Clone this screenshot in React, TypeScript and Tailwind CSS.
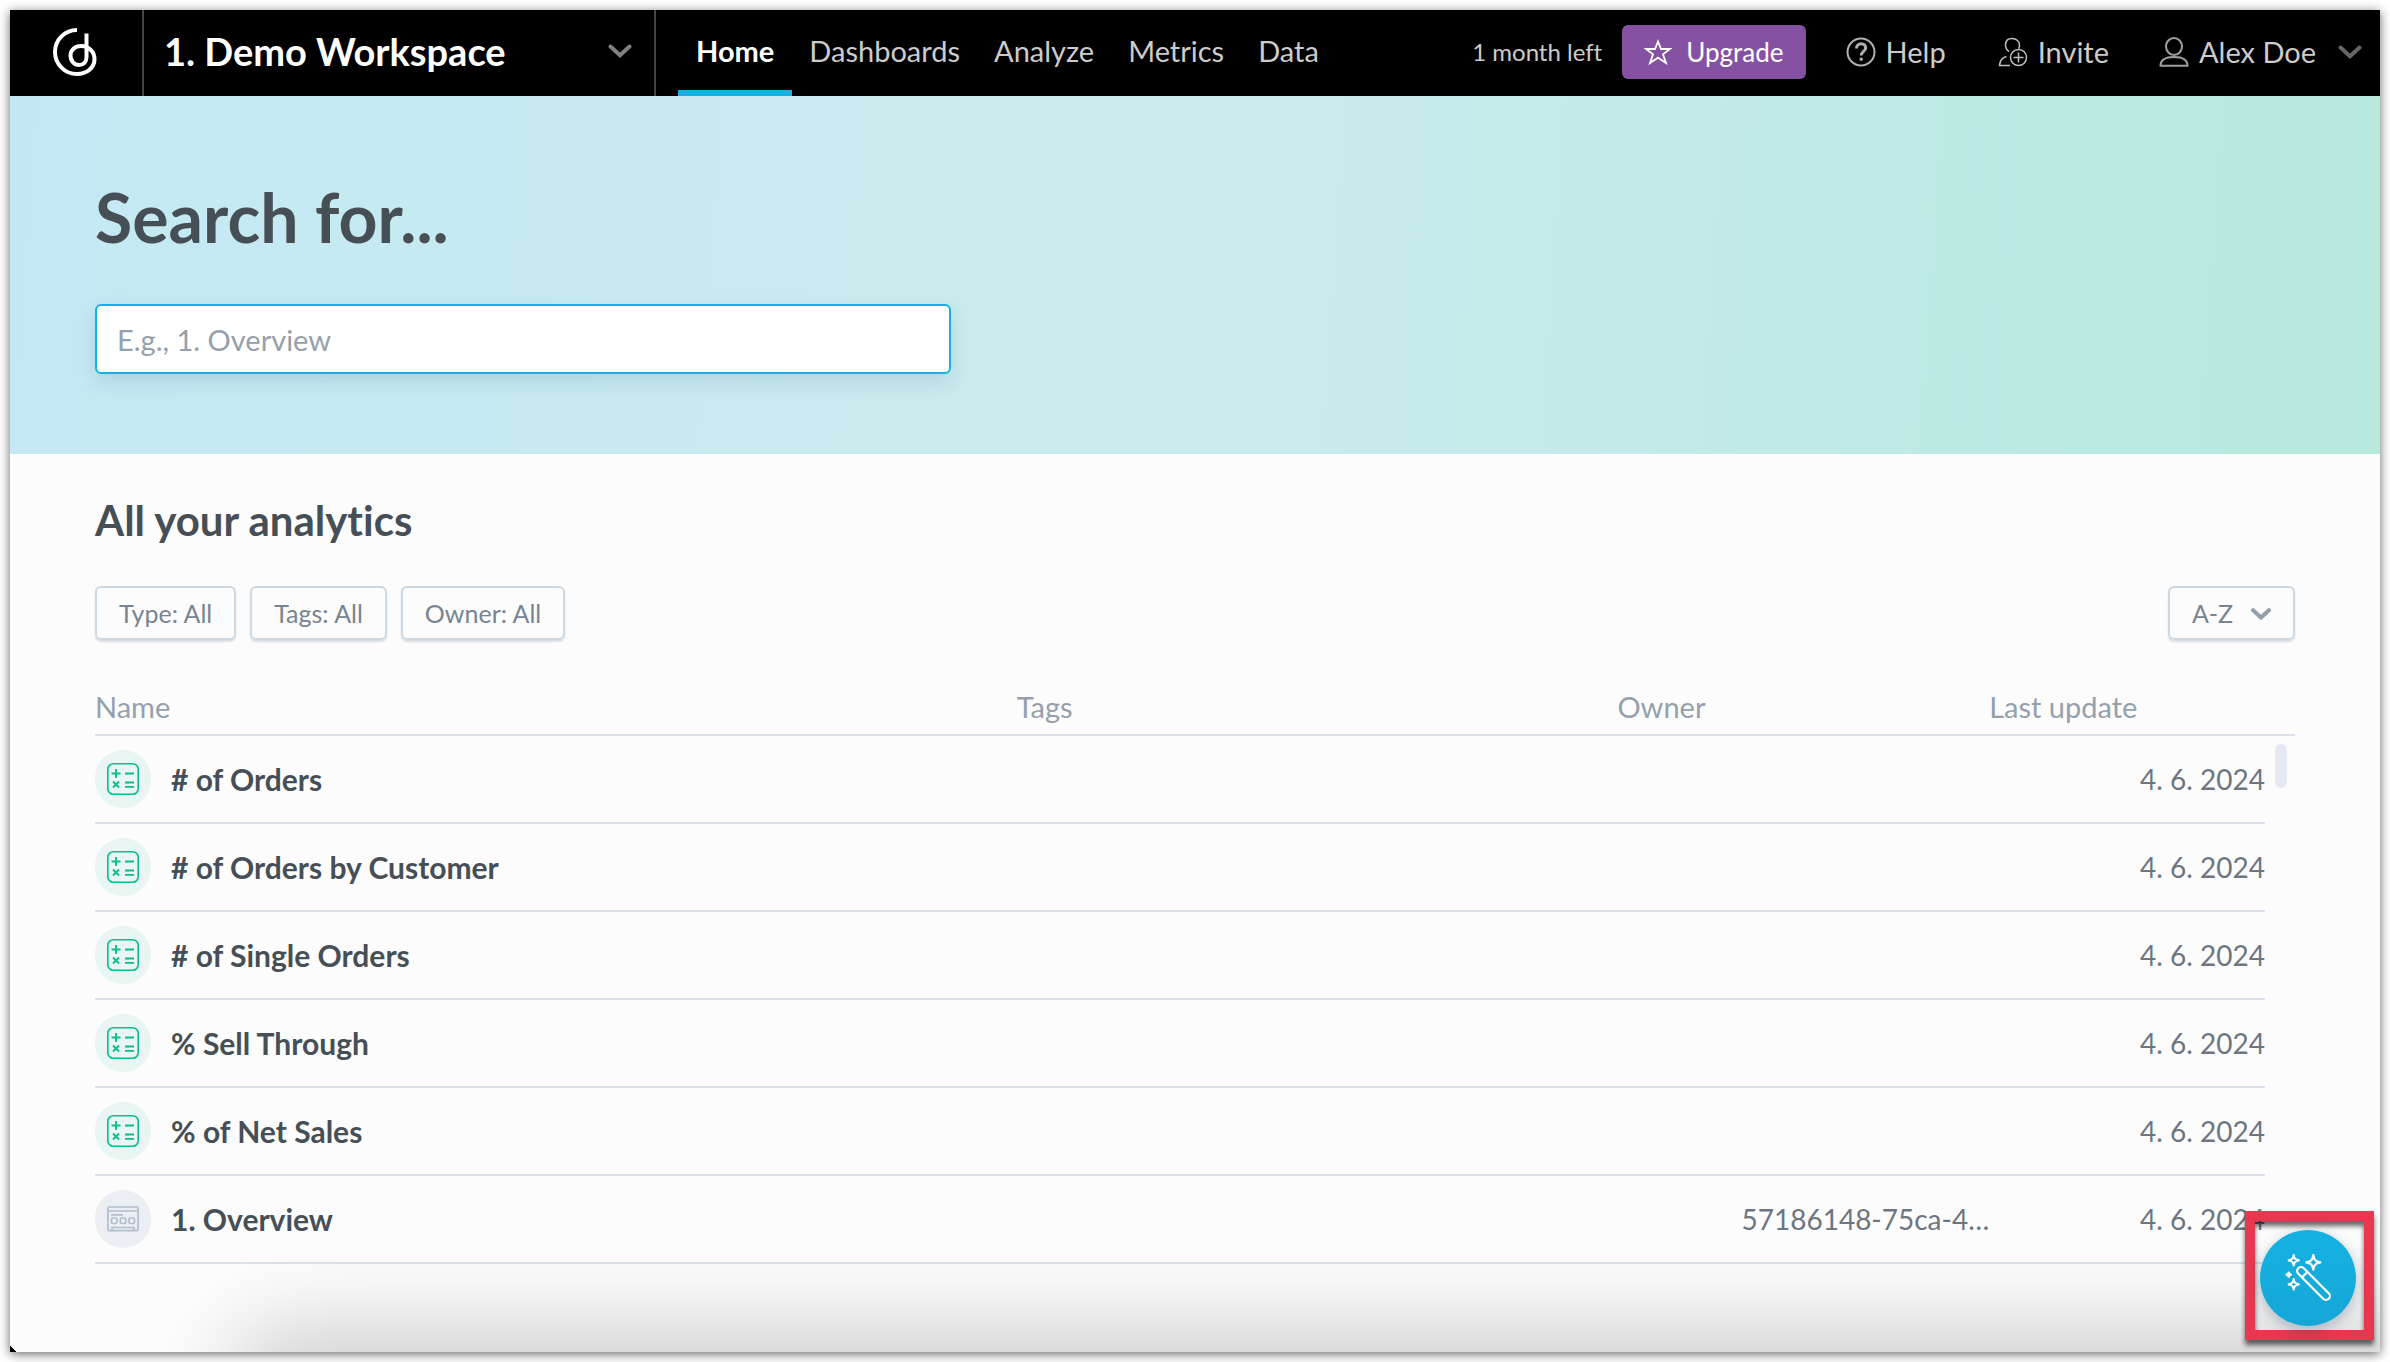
import { ReactNode } from "react";

function Chevron({ className, stroke = 4 }: { className: string; stroke?: number }) {
  return (
    <svg viewBox="0 0 24 14" className={className} fill="none" stroke="currentColor" strokeWidth={stroke} strokeLinecap="round" strokeLinejoin="miter" aria-hidden="true">
      <path d="M2.5 2.5 12 11.2 21.5 2.5" />
    </svg>
  );
}

function Logo() {
  return (
    <svg viewBox="0 0 44 48" className="h-12 w-11" fill="none" stroke="#fff" strokeWidth="4" aria-hidden="true">
      <path d="M24 2A22 22 0 0 0 2 24a22 22 0 0 0 22 22c10 0 17.500-6.500 17.500-15 0-7.500-6-13-13.500-13-6 0-10.500 4-10.500 9.500S21.500 37 26 37c4.500 0 7.500-3 7.500-8V5.500" />
    </svg>
  );
}

function StarIcon() {
  return (
    <svg viewBox="0 0 28 26" className="h-[26px] w-7" fill="none" stroke="currentColor" strokeWidth="1.8" strokeLinejoin="miter" aria-hidden="true">
      <path d="M14 2.500 17 10h9l-7 5.300 3 8.700-8-5.300L6 24l3-8.700L2 10h9z" />
    </svg>
  );
}

function HelpIcon() {
  return (
    <svg viewBox="0 0 30 30" className="size-[30px]" fill="none" stroke="#b0b0b0" strokeWidth="2" aria-hidden="true">
      <circle cx="15" cy="15" r="13.500" />
      <path d="M10.500 11.500c0-3 2-4.700 4.600-4.700s4.600 1.700 4.600 4.300c0 3.400-4.500 3.400-4.500 7.400" strokeWidth="3" />
      <circle cx="15.200" cy="22.300" r="1" strokeWidth="1.500" fill="#b0b0b0" />
    </svg>
  );
}

function InviteIcon() {
  return (
    <svg viewBox="0 0 30 30" className="size-[30px]" fill="none" stroke="#c0c0c0" strokeWidth="1.500" aria-hidden="true">
      <path d="M11 14.500C8.500 13 7.500 10.500 7.500 8c0-4 2.500-6.500 6.500-6.500S21.500 4 21.500 8c0 1.500-.3 2.600-.8 3.700M8.500 19.500C4.500 20.500 2 23 1.500 28.500H12" />
      <circle cx="20.500" cy="20.500" r="8" />
      <path d="M20.500 15.500v10M15.500 20.500h10" />
    </svg>
  );
}

function UserIcon() {
  return (
    <svg viewBox="0 0 30 30" className="size-[30px]" fill="none" stroke="#a0a0a0" strokeWidth="2" aria-hidden="true">
      <ellipse cx="15" cy="9.500" rx="8" ry="8.500" />
      <path d="M1.500 28.800c0-6 5-8.800 13.500-8.800s13.500 2.800 13.500 8.800z" />
    </svg>
  );
}

function MetricIcon() {
  return (
    <span className="flex h-[58px] w-14 items-center justify-center rounded-full bg-[#e8f5f2]">
      <svg viewBox="0 0 32 32" className="size-8" fill="none" stroke="#00c18d" strokeWidth="1.600" aria-hidden="true">
        <rect x="0.800" y="0.800" width="30.400" height="30.400" rx="5.500" />
        <path d="M4.500 10.500h9M9 6v9M18 10.500h9M6 18.500l6 6M12 18.500l-6 6M18 19.500h9M18 23.800h9" strokeWidth="1.800" />
      </svg>
    </span>
  );
}

function DashboardIcon() {
  return (
    <span className="flex h-[58px] w-14 items-center justify-center rounded-full bg-[#ebeef3]">
      <svg viewBox="0 0 32 26" className="h-[26px] w-8" fill="none" stroke="#b2bfcc" strokeWidth="1.700" aria-hidden="true">
        <rect x="0.900" y="1" width="30.200" height="23.600" rx="1.500" />
        <path d="M1 5h30M4 8.800h12M5 24v-2.500h22V24" />
        <rect x="4.500" y="12" width="5.500" height="5.500" rx="1.500" />
        <rect x="13.300" y="12" width="5.500" height="5.500" rx="1.500" />
        <rect x="22" y="12" width="5.500" height="5.500" rx="1.500" />
      </svg>
    </span>
  );
}

function WandIcon() {
  return (
    <svg viewBox="0 0 48 48" className="size-12" fill="none" stroke="#fff" strokeWidth="2.2" strokeLinejoin="round" strokeLinecap="round" aria-hidden="true">
      <g transform="translate(29.500 29.500) rotate(45)">
        <rect x="-21.500" y="-3.900" width="43" height="7.800" rx="3.900" />
        <path d="M-12.500-3.500v7" />
      </g>
      <path d="M29.300 1c.7 4.800 2.300 6.500 7 7.300-4.700.8-6.300 2.500-7 7.300-.7-4.800-2.300-6.500-7-7.300 4.700-.8 6.300-2.500 7-7.300z" />
      <path d="M9.700 1.200c.5 3.500 1.600 4.600 5 5.100-3.400.5-4.500 1.600-5 5.100-.5-3.500-1.600-4.600-5-5.100 3.400-.5 4.500-1.600 5-5.100zM9.700 25.200c.5 3.500 1.600 4.600 5 5.100-3.400.5-4.500 1.600-5 5.100-.5-3.500-1.600-4.600-5-5.100 3.400-.5 4.500-1.600 5-5.100z" />
      <path d="M4.700 18.500c.3 1.500.7 1.900 2.200 2.200-1.500.3-1.900.7-2.200 2.200-.3-1.500-.7-1.900-2.200-2.200 1.500-.3 1.900-.7 2.200-2.200z" fill="#fff" />
    </svg>
  );
}

const items: { name: string; owner?: string; dashboard?: boolean }[] = [
  { name: "# of Orders" },
  { name: "# of Orders by Customer" },
  { name: "# of Single Orders" },
  { name: "% Sell Through" },
  { name: "% of Net Sales" },
  { name: "1. Overview", owner: "57186148-75ca-4…", dashboard: true },
];

function OutlineButton({ children }: { children: ReactNode }) {
  return (
    <button className="flex h-[54px] items-center gap-[18px] rounded-md border-2 border-[#ccd8e2] px-[22px] pt-[2px] text-[25px] text-[#778491] shadow-[0_2px_2px_rgba(20,56,93,0.15)]">
      {children}
    </button>
  );
}

export default function App() {
  return (
    <div className="flex min-h-screen flex-col bg-white p-[10px] font-['Lato',sans-serif] [font-variant-ligatures:none]">
      <div className="relative flex flex-1 flex-col overflow-clip bg-[#fcfcfc] shadow-[0_2px_10px_rgba(0,0,0,0.6)]">
        <header className="flex h-[86px] items-stretch bg-black text-[29px] text-[#ccc]">
          <a href="#home" aria-label="Start page" className="flex w-[132px] shrink-0 items-center justify-center pr-[2px] pb-[2px]"><Logo /></a>
          <button className="flex w-[514px] shrink-0 items-center justify-between border-x-2 border-[#444] pr-[22px] pb-1 pl-5 text-[38px] font-bold text-white">
            1. Demo Workspace
            <Chevron className="h-[14px] w-6 text-[#808080]" />
          </button>
          <nav className="ml-[22px] flex">
            <a href="#home" className="flex items-center border-b-6 border-[#14b2e2] px-[18px] pt-[2px] font-bold text-white">Home</a>
            <a href="#dashboards" className="flex items-center px-[17px] pb-1">Dashboards</a>
            <a href="#analyze" className="flex items-center px-[17px] pb-1">Analyze</a>
            <a href="#metrics" className="flex items-center px-[17px] pb-1">Metrics</a>
            <a href="#data" className="flex items-center px-[17px] pb-1">Data</a>
          </nav>
          <div className="ml-auto flex items-center pr-[18px] pb-[2px]">
            <span className="mr-5 text-2xl">1 month left</span>
            <button className="mr-10 flex h-[54px] items-center gap-[14px] rounded-md bg-[#8551a3] px-[22px] text-[26px] text-white"><StarIcon />Upgrade</button>
            <button className="mr-[52px] flex items-center gap-[10px]"><HelpIcon />Help</button>
            <button className="mr-[50px] flex items-center gap-[10px]"><InviteIcon />Invite</button>
            <button className="flex items-center gap-[10px]"><UserIcon />Alex Doe<Chevron className="ml-3 h-[14px] w-6 text-[#666]" /></button>
          </div>
        </header>
        <section className="h-[358px] bg-[linear-gradient(94deg,#c4e9f4_0%,#c8ebef_35%,#c8ebed_55%,#b7e9de_98%)] px-[85px] pt-[78px]">
          <h1 className="text-[68px] leading-[86px] font-bold text-[#464e56]"><label htmlFor="search">Search for...</label></h1>
          <input id="search" placeholder="E.g., 1. Overview" className="mt-11 block h-[70px] w-[856px] rounded-md border-2 border-[#14b2e2] bg-white px-5 text-[29px] text-[#464e56] shadow-[0_8px_20px_rgba(20,56,93,0.12)] outline-none placeholder:text-[#94a1ad]" />
        </section>
        <main className="px-[85px] pt-10">
          <h2 className="text-[42px] leading-[52px] font-bold text-[#464e56]">All your analytics</h2>
          <div className="mt-10 flex justify-between">
            <div className="flex gap-[14px]">
              <OutlineButton>Type: All</OutlineButton>
              <OutlineButton>Tags: All</OutlineButton>
              <OutlineButton>Owner: All</OutlineButton>
            </div>
            <OutlineButton>A-Z<Chevron className="h-3 w-5 text-[#94a1ad]" stroke={5} /></OutlineButton>
          </div>
          <div className="relative mt-10">
            <table className="w-full table-fixed border-separate border-spacing-0 text-[28px] text-[#6d7680]">
              <colgroup>
                <col className="w-[41.9%]" />
                <col className="w-[27.3%]" />
                <col className="w-[16.9%]" />
                <col />
                <col className="w-[30px]" />
              </colgroup>
              <thead>
                <tr className="h-14 text-left text-[29px] text-[#94a1ad] *:border-b-2 *:border-[#dde1ec] *:font-normal">
                  <th>Name</th>
                  <th>Tags</th>
                  <th>Owner</th>
                  <th colSpan={2}>Last update</th>
                </tr>
              </thead>
              <tbody>
                {items.map((item) => (
                  <tr key={item.name} className="h-[88px]">
                    <td className="border-b-2 border-[#dde1ec]">
                      <a href="#item" className="flex items-center gap-5 text-[30px] font-bold text-[#464e56]">
                        {item.dashboard ? <DashboardIcon /> : <MetricIcon />}
                        {item.name}
                      </a>
                    </td>
                    <td className="border-b-2 border-[#dde1ec]" />
                    <td className="border-b-2 border-[#dde1ec] text-right">{item.owner}</td>
                    <td className="border-b-2 border-[#dde1ec] text-right">4. 6. 2024</td>
                    <td />
                  </tr>
                ))}
              </tbody>
            </table>
            <div className="absolute top-16 right-2 h-11 w-3 rounded-full bg-[#e4e8f0]" />
          </div>
        </main>
        <div className="pointer-events-none absolute right-[-200px] bottom-[-60px] left-[240px] h-[60px] rounded-full shadow-[0_0_90px_20px_rgba(0,0,0,0.2)]" />
        <div className="pointer-events-none absolute bottom-0 left-0 size-[7px] bg-[linear-gradient(45deg,#000_45%,transparent_50%)]" />
        <div className="absolute right-[6px] bottom-3 size-[129px] border-[10px] border-[#e8384f] p-[5px] pt-[9px] shadow-[0_5px_5px_rgba(0,0,0,0.6),inset_0_5px_5px_rgba(0,0,0,0.6)]">
          <button aria-label="Assistant" className="flex size-24 items-center justify-center rounded-full bg-linear-to-b from-[#14b2e2] to-[#16a6d6] shadow-[0_4px_14px_rgba(20,56,93,0.3)]"><WandIcon /></button>
        </div>
      </div>
    </div>
  );
}
